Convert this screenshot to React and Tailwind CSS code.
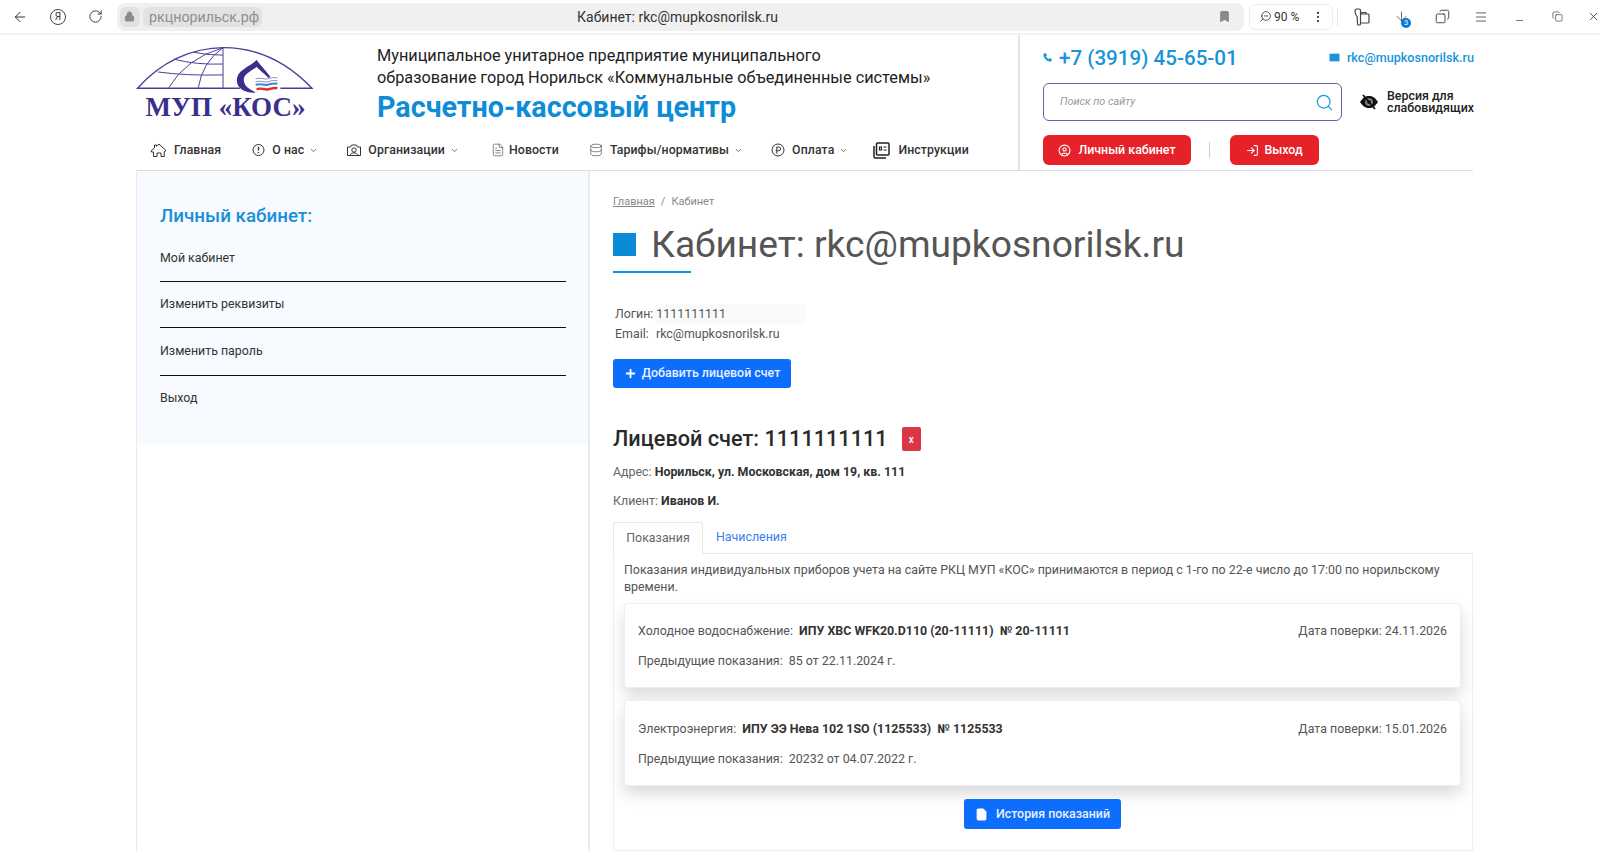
import { ArrowLeft, RotateCw, Lock, Bookmark, ZoomOut, EllipsisVertical, Menu, Minus, X, Copy, ArrowDown, Database, ChevronDown, Phone, Mail, Search, CircleUser, LogIn, Plus, File, FileText } from "lucide-react";

const Chevron = () => <ChevronDown size={9} strokeWidth={2} className="text-[#444]" />;

function HomeIcon() {
  return (
    <svg width="17" height="14" viewBox="0 0 17 14" fill="none" stroke="#333" strokeWidth="1">
      <path d="M1 8l3.500-3V2h2v1.300L9 1l7 6.500-1.800 1.200v4.800H11V10H7v3.500H3.500V9H1.500z" />
    </svg>
  );
}

function NoticeIcon() {
  return (
    <svg width="13" height="14" viewBox="0 0 13 14" fill="none" stroke="#333" strokeWidth="1">
      <circle cx="6.500" cy="7" r="5.500" />
      <path d="M6.500 3.800v3.700M6.500 9v1" strokeWidth="1.400" />
    </svg>
  );
}

function OrgIcon() {
  return (
    <svg width="16" height="14" viewBox="0 0 16 14" fill="none" stroke="#333" strokeWidth="1">
      <path d="M1.500 4h3l1-2h5l1 2h3v8.500h-13z" />
      <circle cx="8" cy="7" r="2.200" />
      <path d="M4 12.500c.5-2 2-2.600 4-2.600s3.500.6 4 2.600" />
    </svg>
  );
}

function RubleIcon() {
  return (
    <svg width="14" height="14" viewBox="0 0 14 14" fill="none" stroke="#333" strokeWidth="1">
      <circle cx="7" cy="7" r="6" />
      <path d="M5.800 10.500V4h2a1.800 1.800 0 0 1 0 3.700H4.500" />
    </svg>
  );
}

function GuideIcon() {
  return (
    <svg width="18" height="17" viewBox="0 0 18 17" fill="none" stroke="#222" strokeWidth="1.500">
      <rect x="4.500" y="1" width="12.500" height="12" rx="1" />
      <path d="M2 4v10.500a1.500 1.500 0 0 0 1.500 1.500H14" />
      <path d="M7.500 5h2v3h-2zM11.500 5h3M11.500 8h3" strokeWidth="1.200" />
    </svg>
  );
}

function EyeIcon() {
  return (
    <svg width="20" height="18" viewBox="0 0 20 18" className="ml-[17px] shrink-0">
      <path d="M1 9c3-4.500 5.500-6 9-6s6 1.500 9 6c-3 4.500-5.500 6-9 6s-6-1.500-9-6z" fill="#111" />
      <circle cx="10" cy="9" r="3.800" fill="#8a8a8a" />
      <circle cx="10" cy="9" r="2" fill="#111" />
      <path d="M4 2l12 14" stroke="#111" strokeWidth="1.800" />
    </svg>
  );
}

function ExtIcon() {
  return (
    <svg width="17" height="18" viewBox="0 0 17 18" fill="none" stroke="#444" strokeWidth="1.200" className="ml-[15px]">
      <path d="M2 2.500C2 1.500 3 1 4 1h2c1 0 1.500.7 1.500 1.500V16c0 .6-.4 1-1 1H5.500c-.8 0-1-.7-1-1.300L4.200 9C2.800 7.500 2 5 2 2.500z" />
      <path d="M7.500 6H15c.6 0 1 .4 1 1v7c0 .6-.4 1-1 1H7.500" />
      <path d="M9 6V4.500h4V6" />
    </svg>
  );
}

function Logo() {
  return (
    <div className="w-[177px] h-[72px] flex flex-col items-center shrink-0 -mt-[1px]">
      <svg width="176" height="43" viewBox="0 0 178 43" fill="none" stroke="#4a3f94" strokeWidth="1" className="overflow-visible mt-[1px]">
        <path d="M0.500 42.500C24 16 55 1.500 88 1.500s63 14 89 41z" strokeWidth="1.300" />
        <path d="M87 1.500v41M37 13Q60 19 87 18M21 26Q50 30 87 29M57 6Q70 9 87 9M87 1.500Q50 12 32 42M87 1.500Q66 16 62 42" />
        <rect x="104" y="41" width="41" height="3" fill="#ffffff" stroke="none" />
        <path d="M121 14C112 22 101 24 101 35C101 42 108 47 118 47L122 47C113 44 108 40 108 34C108 28 114 26 121 21C125 25 129 28 133 32L135 31C130 25 125 19 121 14Z" fill="#3a2f8c" stroke="none" />
        <rect x="119" y="32" width="25" height="15" fill="#ffffff" stroke="none" />
        <path d="M120 33c5-2 8 1 12 0s6-2 10-1M120 36c5-2 8 1 12 0s6-2 10-1" stroke="#8a8fc0" />
        <path d="M120 39c5-2 8 1 12 0s6-2 10-1" stroke="#3a86d0" strokeWidth="2" />
        <path d="M121 43.500c5-2 8 1 12 0s6-2 9-1" stroke="#e0322f" strokeWidth="2.500" />
      </svg>
      <div className="mt-[4px] ml-[2px] text-[#3a2f8c] font-bold text-[27px] leading-[28px] whitespace-nowrap font-['Liberation_Serif',serif]">МУП «КОС»</div>
    </div>
  );
}

function NavItem({ icon, label, drop, className }) {
  return (
    <div className={`flex items-center h-full text-[12.300px] font-medium tracking-[0.1px] text-[#333] whitespace-nowrap ${className}`}>
      {icon}
      <span>{label}</span>
      {drop && <span className="ml-[5px] mt-[1px]"><Chevron /></span>}
    </div>
  );
}

function BrowserBar() {
  return (
    <div className="h-[35px] flex items-center bg-white border-b-2 border-[#f2f2f2] text-[#333] shrink-0">
      <div className="w-[117px] pl-[12px] flex items-center">
        <ArrowLeft size={16} strokeWidth={1.500} />
        <div className="ml-[22px] w-[16px] h-[16px] rounded-full border border-[#444] text-[10px] flex items-center justify-center">Я</div>
        <RotateCw size={15} strokeWidth={1.500} className="ml-[22px]" />
      </div>
      <div className="w-[1128px] h-[28px] rounded-lg bg-[#f0f0f0] flex items-center pl-[3px]">
        <div className="w-[20px] h-[20px] rounded-md bg-[#e2e2e2] flex items-center justify-center"><Lock size={11} className="text-[#8a8a8a]" fill="#8a8a8a" /></div>
        <div className="ml-[3px] h-[20px] w-[119px] rounded-md bg-[#e2e2e2] text-[14.300px] leading-[20px] text-[#8f8f8f] pl-[6px]">ркцнорильск.рф</div>
        <div className="flex-1 text-center text-[14px] leading-[20px] mt-[1px] text-[#333] pr-[125px]">Кабинет: rkc@mupkosnorilsk.ru</div>
        <Bookmark size={13} fill="#8a8a8a" className="text-[#8a8a8a] mr-[13px]" />
      </div>
      <div className="ml-[5px] w-[84px] h-[26px] rounded-md border border-[#eeeeee] flex items-center pl-[9px] text-[12px]">
        <ZoomOut size={13} strokeWidth={1.500} className="-scale-x-100" />
        <span className="ml-[2px]">90 %</span>
        <EllipsisVertical size={14} strokeWidth={1.800} className="ml-[12px]" />
      </div>
      <div className="ml-[4px] h-[18px] border-l border-[#e6e6e6]" />
      <ExtIcon />
      <div className="ml-[24px] relative">
        <ArrowDown size={15} strokeWidth={1.200} />
        <div className="absolute left-[7px] top-[9px] w-[10px] h-[10px] rounded-full bg-[#0b78d8] text-white text-[7.500px] leading-[10px] text-center">3</div>
      </div>
      <Copy size={15} strokeWidth={1.400} className="ml-[26px] -scale-x-100" />
      <Menu size={14} strokeWidth={1.300} className="ml-[24px]" />
      <Minus size={11} strokeWidth={1.400} className="ml-[26px] mt-[7px]" />
      <Copy size={11} strokeWidth={1.400} className="ml-[27px]" />
      <X size={13} strokeWidth={1.400} className="ml-[24px]" />
    </div>
  );
}

function Header() {
  return (
    <div className="h-[136px] flex border-b border-[#dddddd] shrink-0">
      <div className="w-[884px] shrink-0 border-r-2 border-[#e5e5e5] flex flex-col">
        <div className="h-[96px] flex pt-[11px]">
          <Logo />
          <div className="ml-[64px] -mt-[1px] text-[#222] text-[16.300px] leading-[22px]">
            <div>Муниципальное унитарное предприятие муниципального</div>
            <div>образование город Норильск «Коммунальные объединенные системы»</div>
            <div className="text-[#0d8dd6] text-[28.700px] leading-[36px] font-bold">Расчетно-кассовый центр</div>
          </div>
        </div>
        <div className="h-[38px] flex items-center">
          <NavItem className="ml-[14px]" label="Главная" icon={<span className="mr-[7px]"><HomeIcon /></span>} />
          <NavItem className="ml-[31px]" label="О нас" drop icon={<span className="mr-[7px]"><NoticeIcon /></span>} />
          <NavItem className="ml-[28px]" label="Организации" drop icon={<span className="mr-[6px]"><OrgIcon /></span>} />
          <NavItem className="ml-[32px]" label="Новости" icon={<FileText size={14} strokeWidth={1} className="mr-[4px] text-[#333]" />} />
          <NavItem className="ml-[30px]" label="Тарифы/нормативы" drop icon={<Database size={14} strokeWidth={1} className="mr-[7px] text-[#333]" />} />
          <NavItem className="ml-[28px]" label="Оплата" drop icon={<span className="mr-[7px]"><RubleIcon /></span>} />
          <NavItem className="ml-[24px]" label="Инструкции" icon={<span className="mr-[8px]"><GuideIcon /></span>} />
        </div>
      </div>
      <div className="flex-1 pl-[23px] flex flex-col">
        <div className="h-[46px] flex items-center justify-between">
          <div className="flex items-center text-[#1a94d8]">
            <Phone size={9} fill="#1a94d8" className="mr-[7px]" />
            <span className="text-[20.600px] font-medium">+7 (3919) 45-65-01</span>
          </div>
          <div className="flex items-center text-[#1a94d8]">
            <Mail size={13} fill="#1a94d8" stroke="#ffffff" strokeWidth={1.500} className="mr-[6px]" />
            <span className="text-[12.600px] font-medium">rkc@mupkosnorilsk.ru</span>
          </div>
        </div>
        <div className="h-[38px] mt-[2px] flex items-center">
          <div className="w-[299px] shrink-0 h-[38px] rounded-md border border-[#6a5fa8] flex items-center justify-between pl-[16px] pr-[7px] text-[10.800px] italic text-[#999]">
            <span>Поиск по сайту</span>
            <Search size={19} strokeWidth={1.500} className="text-[#1a94d8]" />
          </div>
          <EyeIcon />
          <div className="ml-[8px] whitespace-nowrap text-[12.400px] leading-[12.500px] font-medium text-[#222]">Версия для<br />слабовидящих</div>
        </div>
        <div className="flex items-center mt-[14px]">
          <div className="w-[148px] h-[30px] rounded-md bg-[#e62129] text-white text-[12.400px] font-medium flex items-center justify-center">
            <CircleUser size={13} className="mr-[7px]" />Личный кабинет
          </div>
          <div className="ml-[18px] h-[16px] border-l border-[#cccccc]" />
          <div className="ml-[20px] w-[89px] h-[30px] rounded-md bg-[#e62129] text-white text-[12.400px] font-medium flex items-center justify-center">
            <LogIn size={13} className="mr-[5px]" />Выход
          </div>
        </div>
      </div>
    </div>
  );
}

function Sidebar() {
  return (
    <div className="w-[454px] border-l border-r-2 border-[#eaeaea] shrink-0">
      <div className="h-[273px] bg-[#f7faff] px-[23px] pt-[32px]">
        <div className="text-[#1a8fd8] text-[18.800px] leading-[26px] font-medium">Личный кабинет:</div>
        <div className="mt-[17px] w-[406px] text-[12.400px] leading-[20px] text-[#333]">
          <div className="h-[36px] pt-[2px] border-b border-[#111]">Мой кабинет</div>
          <div className="h-[46px] pt-[12px] border-b border-[#111]">Изменить реквизиты</div>
          <div className="h-[48px] pt-[13px] border-b border-[#111]">Изменить пароль</div>
          <div className="h-[47px] pt-[12px]">Выход</div>
        </div>
      </div>
    </div>
  );
}

function MeterCard({ type, model, no, date, prev, className }) {
  return (
    <div className={`rounded-sm bg-white border border-[#eeeeee] shadow-[0_8px_16px_rgba(0,0,0,0.15)] px-[13px] ${className}`}>
      <div className="flex justify-between text-[12.400px] leading-[20px] text-[#555]">
        <div>{type}:&nbsp; <b className="text-[#333] font-bold">{model}&nbsp; № {no}</b></div>
        <div>Дата поверки: {date}</div>
      </div>
      <div className="text-[12.400px] leading-[20px] text-[#555] mt-[10px]">Предыдущие показания:&nbsp; {prev}</div>
    </div>
  );
}

function Content() {
  return (
    <div className="flex-1 pl-[23px] flex flex-col">
      <div className="mt-[22px] text-[11px] leading-[18px] text-[#888]"><span className="underline">Главная</span><span className="mx-[6px]">/</span>Кабинет</div>
      <div className="mt-[9px] h-[48px] flex items-center">
        <div className="w-[23px] h-[23px] bg-[#0a8bd6]" />
        <div className="ml-[15px] text-[37.200px] leading-[48px] text-[#555] whitespace-nowrap">Кабинет: rkc@mupkosnorilsk.ru</div>
      </div>
      <div className="mt-[3px] w-[78px] h-[2px] bg-[#0d9ae0]" />
      <div className="mt-[31px] h-[20px] flex items-center text-[12.400px] text-[#555] pl-[2px]">
        <span>Логин:</span>
        <span className="ml-[2px] pl-[1px] w-[151px] h-[20px] leading-[20px] bg-[#fafafa]">1111111111</span>
      </div>
      <div className="h-[21px] flex items-center text-[12.400px] text-[#555] pl-[2px]">
        <span className="w-[41px]">Email:</span>rkc@mupkosnorilsk.ru
      </div>
      <div className="mt-[14px] w-[178px] h-[30px] rounded-[3px] bg-[#0d6efd] text-[#e8f0ff] text-[12.400px] font-medium flex items-center justify-center">
        <Plus size={13} strokeWidth={3.500} className="mr-[5px] text-white" />Добавить лицевой счет
      </div>
      <div className="mt-[39px] flex items-center h-[24px]">
        <div className="text-[21.700px] font-medium text-[#2a2a2a] whitespace-nowrap">Лицевой счет: 1111111111</div>
        <div className="ml-[14px] w-[19px] h-[24px] rounded-[2px] bg-[#dc3545] text-white text-[10px] font-medium flex items-center justify-center">x</div>
      </div>
      <div className="mt-[11px] text-[12.400px] leading-[20px] text-[#666]">Адрес: <b className="text-[#333]">Норильск, ул. Московская, дом 19, кв. 111</b></div>
      <div className="mt-[9px] text-[12.400px] leading-[20px] text-[#666]">Клиент: <b className="text-[#333]">Иванов И.</b></div>

      <div className="mt-[11px] h-[32px] flex border-b border-[#e8e8e8] text-[12.400px]">
        <div className="w-[90px] h-[32px] border border-[#e8e8e8] border-b-white rounded-t-[3px] bg-white flex items-center justify-center text-[#666]">Показания</div>
        <div className="ml-[13px] flex items-center text-[#3a7ff0]">Начисления</div>
      </div>
      <div className="h-[301px] border border-t-0 border-[#eeeeee] pl-[10px] pr-[11px] pt-[7px] flex flex-col">
        <div className="text-[12.400px] leading-[17px] text-[#555]">Показания индивидуальных приборов учета на сайте РКЦ МУП «КОС» принимаются в период с 1-го по 22-е число до 17:00 по норильскому времени.</div>
        <MeterCard className="mt-[8px] h-[85px] pt-[17px]" type="Холодное водоснабжение" model="ИПУ ХВС WFK20.D110 (20-11111)" no="20-11111" date="24.11.2026" prev="85 от 22.11.2024 г." />
        <MeterCard className="mt-[12px] h-[86px] pt-[18px]" type="Электроэнергия" model="ИПУ ЭЭ Нева 102 1SO (1125533)" no="1125533" date="15.01.2026" prev="20232 от 04.07.2022 г." />
        <div className="mt-[13px] mx-auto w-[157px] h-[30px] rounded-[3px] bg-[#0d6efd] text-[#e8f0ff] text-[12.400px] font-medium flex items-center justify-center">
          <File size={13} fill="#ffffff" className="mr-[8px] text-white" />История показаний
        </div>
      </div>
    </div>
  );
}

export default function App() {
  return (
    <div className="h-[865px] overflow-hidden bg-white flex flex-col font-['Roboto',sans-serif]">
      <BrowserBar />
      <div className="ml-[136px] w-[1337px] flex flex-col">
        <Header />
        <div className="flex h-[680px]">
          <Sidebar />
          <Content />
        </div>
      </div>
    </div>
  );
}
